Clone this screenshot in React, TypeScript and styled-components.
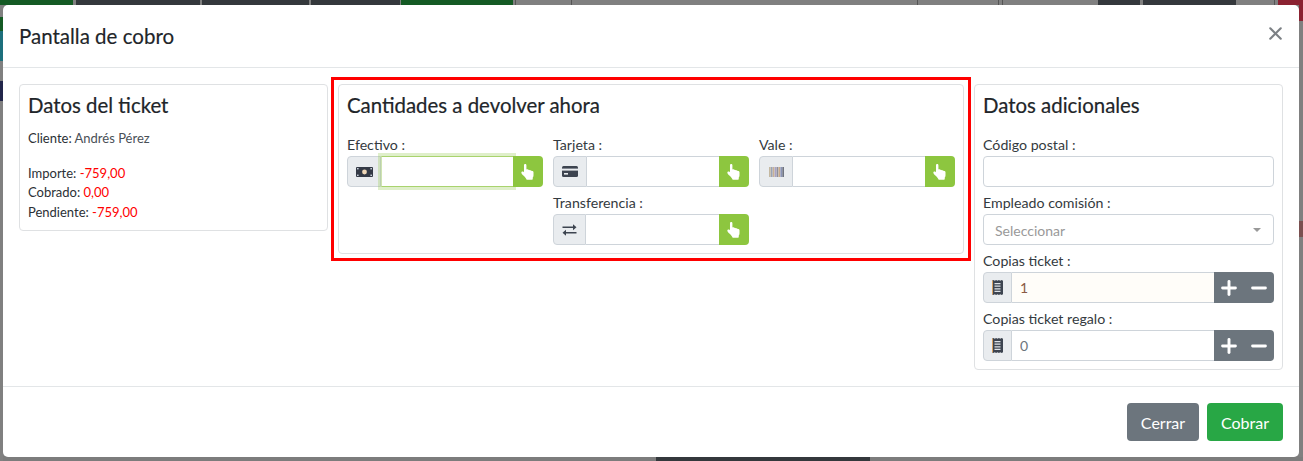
import React from "react";
import styled, { createGlobalStyle } from "styled-components";
import { X, Plus, Minus } from "lucide-react";

const Global = createGlobalStyle`
  html, body { margin: 0; padding: 0; background: #808080; }
  body { width: 1303px; height: 461px; overflow: hidden; font-family: Lato, "Liberation Sans", sans-serif; color: #343a40; }
  * { box-sizing: border-box; }
`;

const Page = styled.div`
  position: relative;
  width: 1303px;
  height: 461px;
  padding: 5px 4px 4px 3px;
  overflow: hidden;
`;

const BackStrip = styled.div<{ $bottom?: boolean }>`
  position: absolute;
  left: 0;
  right: 0;
  height: 5px;
  display: flex;
  ${(p) => (p.$bottom ? "bottom: 0;" : "top: 0;")}
`;

const BackColumn = styled.div<{ $right?: boolean }>`
  position: absolute;
  top: 5px;
  width: ${(p) => (p.$right ? 4 : 3)}px;
  display: flex;
  flex-direction: column;
  ${(p) => (p.$right ? "right: 0;" : "left: 0;")}
`;

const BackBlock = styled.div<{ $w?: number; $h?: number; $c: string }>`
  ${(p) => (p.$w ? `flex: 0 0 ${p.$w}px;` : "")}
  ${(p) => (p.$h ? `flex: 0 0 ${p.$h}px;` : "")}
  background: ${(p) => p.$c};
`;

const Modal = styled.div`
  position: relative;
  height: 452px;
  background: #fff;
  border-radius: 5px;
  display: flex;
  flex-direction: column;
`;

const Header = styled.header`
  height: 63px;
  flex: none;
  border-bottom: 1px solid #e3e6e8;
  display: flex;
  align-items: center;
  justify-content: space-between;
  padding: 0 12px 0 16px;
`;

const Title = styled.h5`
  margin: 0;
  font-size: 20.5px;
  font-weight: 400;
  line-height: 24px;
  color: #212529;
  -webkit-text-stroke: 0.15px #212529;
`;

const Close = styled.button`
  border: 0;
  background: none;
  padding: 0;
  width: 22px;
  height: 22px;
  color: #7c8084;
  display: flex;
  margin-top: -4px;
`;

const Body = styled.div`
  flex: none;
  height: 318px;
  display: flex;
  align-items: flex-start;
  padding: 16px 16px 0;
  gap: 10px;
`;

const Card = styled.section<{ $w: number }>`
  flex: 0 0 ${(p) => p.$w}px;
  width: ${(p) => p.$w}px;
  background: #fff;
  border: 1px solid #dfe1e3;
  border-radius: 4px;
  padding: 7px 8px 1px;
`;

const InfoCard = styled(Card)`
  padding-bottom: 8px;
`;

const CardTitle = styled.h4<{ $tight?: boolean }>`
  margin: 0 0 ${(p) => (p.$tight ? 10 : 17)}px;
  font-size: 20.4px;
  font-weight: 400;
  line-height: 27px;
  color: #212529;
  -webkit-text-stroke: 0.2px #212529;
`;

const Highlight = styled.div`
  flex: 0 0 640px;
  margin: -7px -7px 0 -7px;
  border: 3px solid #f00;
  padding: 4px;
`;

const InfoLine = styled.div<{ $gap?: boolean }>`
  font-size: 13px;
  line-height: 19.5px;
  height: 19.5px;
  margin-bottom: ${(p) => (p.$gap ? "15px" : "0")};
  color: #343a40;
`;

const Strong = styled.span`
  color: #2b3035;
`;

const Light = styled.span`
  color: #495057;
`;

const Red = styled.span`
  color: #f00;
`;

const PayGrid = styled.div`
  display: grid;
  grid-template-columns: repeat(3, 196px);
  column-gap: 10px;
`;

const Field = styled.div<{ $col?: number }>`
  display: flex;
  flex-direction: column;
  height: 58px;
  ${(p) => (p.$col ? `grid-column: ${p.$col};` : "")}
`;

const Label = styled.label`
  font-size: 14.2px;
  line-height: 18px;
  height: 18px;
  margin: 0 0 2px;
  color: #343a40;
  white-space: nowrap;
`;

const Group = styled.div`
  display: flex;
  height: 31px;
  position: relative;
`;

const Addon = styled.span<{ $w?: number }>`
  flex: 0 0 ${(p) => p.$w ?? 34}px;
  background: #e9ecef;
  border: 1px solid #ced4da;
  border-radius: 4px 0 0 4px;
  display: flex;
  align-items: center;
  justify-content: center;
  color: #495057;
`;

const Input = styled.input<{ $focus?: boolean; $round?: boolean }>`
  flex: 1;
  min-width: 0;
  height: 31px;
  font: 14px Lato, "Liberation Sans", sans-serif;
  padding: 0 12px;
  color: #495057;
  outline: 0;
  position: relative;
  z-index: ${(p) => (p.$focus ? 1 : 0)};
  border: 1px solid ${(p) => (p.$focus ? "#a9d36e" : "#ced4da")};
  border-left: ${(p) => (p.$focus || p.$round ? "1px solid" : "0")} ${(p) => (p.$focus ? "#d0e4b2" : "#ced4da")};
  border-right: ${(p) => (p.$round ? "1px solid #ced4da" : "0")};
  border-radius: ${(p) => (p.$round ? "4px" : "0")};
  box-shadow: ${(p) => (p.$focus ? "0 0 0 3px rgba(141,198,63,.28)" : "none")};
  background: #fff;
  width: 100%;
`;

const NumberValue = styled(Input)<{ $tinted?: boolean }>`
  background: ${(p) => (p.$tinted ? "#fffdf9" : "#fff")};
  color: ${(p) => (p.$tinted ? "#8a5a44" : "#6c757d")};
  padding: 0 8px;
`;

const GreenBtn = styled.button`
  flex: 0 0 30px;
  position: relative;
  z-index: 2;
  border: 0;
  padding: 0;
  background: #8dc63f;
  border-radius: 0 4px 4px 0;
  display: flex;
  align-items: center;
  justify-content: center;
`;

const Select = styled.div`
  height: 31px;
  border: 1px solid #ced4da;
  border-radius: 4px;
  display: flex;
  align-items: center;
  justify-content: space-between;
  padding: 2px 12px 0 11px;
  font-size: 14px;
  color: #999;
`;

const Caret = styled.span`
  width: 0;
  height: 0;
  margin-top: -2px;
  border-left: 4px solid transparent;
  border-right: 4px solid transparent;
  border-top: 4px solid #999;
`;

const StepGroup = styled.div`
  flex: 0 0 60px;
  display: flex;
  background: #6c757d;
  border-radius: 0 4px 4px 0;
`;

const Step = styled.button`
  flex: 1;
  border: 0;
  padding: 0;
  background: transparent;
  color: #fff;
  display: flex;
  align-items: center;
  justify-content: center;
`;

const Footer = styled.footer`
  flex: 1;
  border-top: 1px solid #e3e6e8;
  display: flex;
  justify-content: flex-end;
  align-items: center;
  gap: 8px;
  padding: 0 16px 0 0;
`;

const Btn = styled.button<{ $c: string; $w: number }>`
  width: ${(p) => p.$w}px;
  height: 38px;
  border: 0;
  border-radius: 4px;
  background: ${(p) => p.$c};
  color: #fff;
  font: 16px Lato, "Liberation Sans", sans-serif;
  padding: 0;
`;

const Hand = () => (
  <svg width="14" height="16" viewBox="0 0 15 17" aria-hidden="true">
    <path
      fill="#fff"
      d="M3.2 1.4C3.2.6 3.8 0 4.5 0s1.3.6 1.3 1.4v4.5c.3-.3 1.4-.4 1.9.3.5-.3 1.5-.2 1.9.5.6-.3 1.6 0 1.9.7.8-.2 1.9.2 1.9 1.5v3.4c0 1-.4 1.6-.8 2.2V16c0 .5-.3.8-.8.8H6.6c-.4 0-.7-.2-.8-.6-.3-.9-1.2-1.9-2.1-2.9C2.8 12.3.8 10.9.4 9.5c-.3-1.1.7-1.9 1.7-1.5.4.2.8.5 1.1.9V1.4z"
    />
  </svg>
);

const Money = () => (
  <svg width="17" height="10" viewBox="0 0 17 10" aria-hidden="true">
    <rect width="17" height="10" rx="1" fill="#343a46" />
    <circle cx="8.5" cy="5" r="2.4" fill="#f0d8b8" />
    <g fill="#c9d2dc">
      <rect x="1" y="1" width="1.6" height="1.4" />
      <rect x="14.4" y="1" width="1.6" height="1.4" />
      <rect x="1" y="7.6" width="1.6" height="1.4" />
      <rect x="14.4" y="7.6" width="1.6" height="1.4" />
    </g>
  </svg>
);

const CardIcon = () => (
  <svg width="16" height="11" viewBox="0 0 16 11" aria-hidden="true">
    <rect width="16" height="11" rx="1.5" fill="#3d4450" />
    <rect y="2.6" width="16" height="2" fill="#e9ecef" />
    <rect x="2" y="7" width="4" height="1.6" fill="#e9ecef" />
  </svg>
);

const Barcode = () => (
  <svg width="15" height="10" viewBox="0 0 15 10" aria-hidden="true">
    {["#c4b8a0", "#9aa3b5", "#c9b094", "#a8a2c6", "#8e8e9a", "#c9a98a", "#8a93b5", "#6f7480"].map((c, i) => (
      <rect key={i} x={i * 1.9} width={1.7} height={10} fill={c} />
    ))}
  </svg>
);

const Swap = () => (
  <svg width="15" height="12" viewBox="0 0 14 12" aria-hidden="true">
    <path fill="#3d4450" d="M0 2.4h10.5V.2L14 3.2l-3.5 3V4H0zM14 8H3.5V5.8L0 8.8l3.5 3V9.6H14z" />
  </svg>
);

const Receipt = () => (
  <svg width="11" height="15" viewBox="0 0 11 15" aria-hidden="true">
    <path fill="#3d4450" d="M0 .8 1.4 0l1.4.8L4.1 0l1.4.8L6.9 0l1.4.8L9.6 0 11 .8v13.4l-1.4.8-1.3-.8-1.4.8-1.4-.8-1.4.8-1.3-.8-1.4.8L0 14.2z" />
    <path fill="#d8a060" d="M0 .8 1 .3v14.4l-1-.5z" />
    <path fill="#dfe3e8" d="M2.5 3h6v1.2h-6zM2.5 5.6h6v1.2h-6zM2.5 8.2h6v1.2h-6zM2.5 10.8h6V12h-6z" />
  </svg>
);

const DARK = "#34383c";
const GREY = "#808080";
const LINE = "#555";
const GREEN = "#145a24";

const top: [number, string][] = [
  [73, GREEN], [3, GREY], [124, DARK], [2, GREY], [107, DARK], [2, GREY], [89, DARK], [1, GREY],
  [112, GREEN], [2, GREY], [1, LINE], [55, GREY], [1, LINE], [345, GREY], [1, LINE], [80, GREY],
  [1, LINE], [3, GREY], [1, LINE], [95, GREY], [42, DARK], [3, GREY], [93, DARK], [38, GREY],
  [1, LINE], [3, GREY], [26, "#8b2231"],
];

const bottom: [number, string][] = [[656, "#7c7c7c"], [214, DARK], [433, "#7c7c7c"]];

const left: [number, string][] = [[12, GREY], [14, GREEN], [30, "#1d6f7c"], [20, GREY], [20, "#22264a"], [360, GREY]];

const right: [number, string][] = [[16, "#8b2231"], [200, GREY], [16, "#7a5050"], [220, GREY]];

const Pay = ({ label, icon, w, focus, col }: { label: string; icon: React.ReactNode; w?: number; focus?: boolean; col?: number }) => (
  <Field $col={col}>
    <Label>{label}</Label>
    <Group>
      <Addon $w={w}>{icon}</Addon>
      <Input $focus={focus} />
      <GreenBtn><Hand /></GreenBtn>
    </Group>
  </Field>
);

const Copies = ({ label, value, tinted }: { label: string; value: string; tinted?: boolean }) => (
  <Field>
    <Label>{label}</Label>
    <Group>
      <Addon $w={29}><Receipt /></Addon>
      <NumberValue $tinted={tinted} defaultValue={value} />
      <StepGroup>
        <Step><Plus size={22} strokeWidth={3.2} /></Step>
        <Step><Minus size={22} strokeWidth={3.2} /></Step>
      </StepGroup>
    </Group>
  </Field>
);

export default function App() {
  return (
    <Page>
      <Global />
      <BackStrip>{top.map(([w, c], i) => <BackBlock key={i} $w={w} $c={c} />)}</BackStrip>
      <BackStrip $bottom>{bottom.map(([w, c], i) => <BackBlock key={i} $w={w} $c={c} />)}</BackStrip>
      <BackColumn>{left.map(([h, c], i) => <BackBlock key={i} $h={h} $c={c} />)}</BackColumn>
      <BackColumn $right>{right.map(([h, c], i) => <BackBlock key={i} $h={h} $c={c} />)}</BackColumn>
      <Modal>
        <Header>
          <Title>Pantalla de cobro</Title>
          <Close aria-label="Cerrar"><X size={21} strokeWidth={2.4} /></Close>
        </Header>
        <Body>
          <InfoCard $w={309}>
            <CardTitle $tight>Datos del ticket</CardTitle>
            <InfoLine $gap><Strong>Cliente:</Strong> <Light>Andrés Pérez</Light></InfoLine>
            <InfoLine><Strong>Importe:</Strong> <Red>-759,00</Red></InfoLine>
            <InfoLine><Strong>Cobrado:</Strong> <Red>0,00</Red></InfoLine>
            <InfoLine><Strong>Pendiente:</Strong> <Red>-759,00</Red></InfoLine>
          </InfoCard>
          <Highlight>
            <Card $w={626}>
              <CardTitle>Cantidades a devolver ahora</CardTitle>
              <PayGrid>
                <Pay label="Efectivo :" icon={<Money />} focus />
                <Pay label="Tarjeta :" icon={<CardIcon />} />
                <Pay label="Vale :" icon={<Barcode />} />
                <Pay label="Transferencia :" icon={<Swap />} w={33} col={2} />
              </PayGrid>
            </Card>
          </Highlight>
          <Card $w={309}>
            <CardTitle>Datos adicionales</CardTitle>
            <Field>
              <Label>Código postal :</Label>
              <Group><Input $round /></Group>
            </Field>
            <Field>
              <Label>Empleado comisión :</Label>
              <Select>Seleccionar<Caret /></Select>
            </Field>
            <Copies label="Copias ticket :" value="1" tinted />
            <Copies label="Copias ticket regalo :" value="0" />
          </Card>
        </Body>
        <Footer>
          <Btn $c="#6c757d" $w={72}>Cerrar</Btn>
          <Btn $c="#28a745" $w={76}>Cobrar</Btn>
        </Footer>
      </Modal>
    </Page>
  );
}
